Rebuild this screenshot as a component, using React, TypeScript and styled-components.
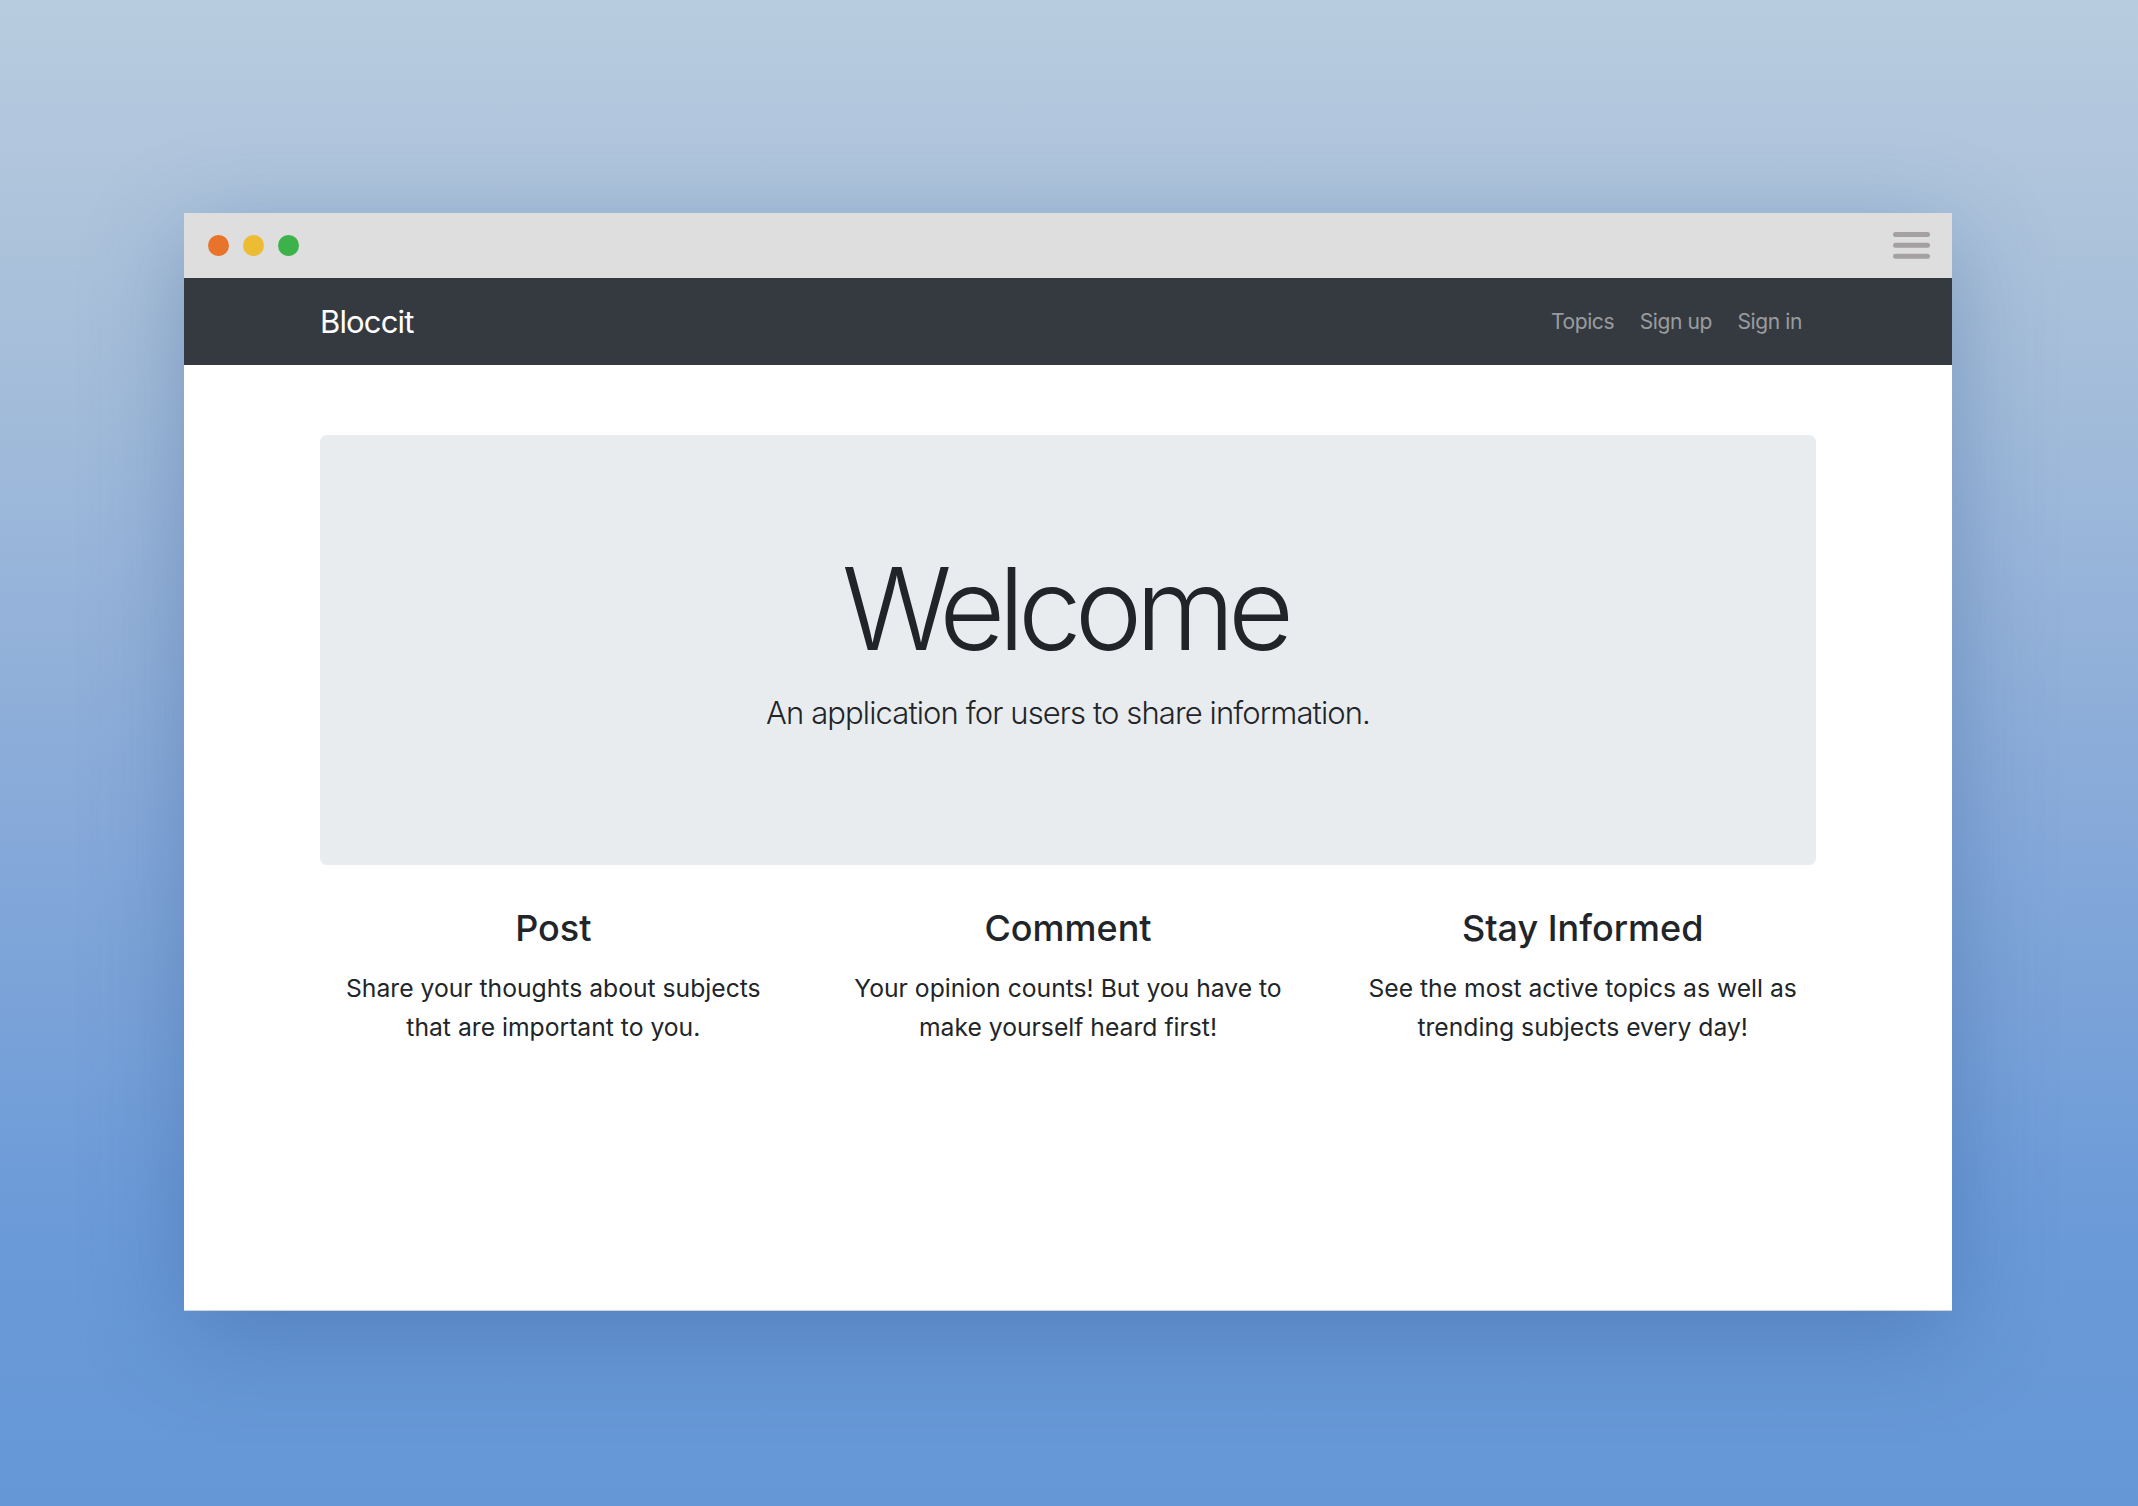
import React from "react";
import styled, { createGlobalStyle } from "styled-components";

const GlobalStyle = createGlobalStyle`
  html, body {
    margin: 0;
    padding: 0;
  }
  body {
    min-height: 1506px;
    background: linear-gradient(180deg, #b8ccdf 0%, #a9c0da 20%, #86a9d9 55%, #6c9bd8 80%, #6596d6 100%);
    font-family: Inter, "Liberation Sans", Arial, sans-serif;
    color: #212529;
  }
`;

const Stage = styled.div`
  padding: 213px 0 196px 184px;
`;

const BrowserWindow = styled.div`
  width: 1768px;
  height: 1098px;
  background: #ffffff;
  display: flex;
  flex-direction: column;
  box-shadow: 0 24px 90px rgba(40, 80, 140, 0.35);
  border-bottom: 1px solid #cfd4da;
  box-sizing: border-box;
`;

const TitleBar = styled.div`
  height: 65px;
  flex: none;
  background: #dedede;
  display: flex;
  align-items: center;
  justify-content: space-between;
  padding: 0 22px 0 24px;
`;

const Dots = styled.div`
  display: flex;
  gap: 14px;
`;

const Dot = styled.span<{ $color: string }>`
  width: 21px;
  height: 21px;
  border-radius: 50%;
  background: ${(p) => p.$color};
`;

const Navbar = styled.nav`
  height: 87px;
  flex: none;
  background: #343a40;
  display: flex;
  align-items: center;
`;

const Container = styled.div`
  width: 1544px;
  margin: 0 auto;
  padding: 0 24px;
  box-sizing: border-box;
`;

const NavInner = styled(Container)`
  display: flex;
  align-items: center;
  justify-content: space-between;
`;

const Brand = styled.a`
  font-size: 31px;
  letter-spacing: -0.85px;
  line-height: 48px;
  color: #ffffff;
  text-decoration: none;
`;

const NavLinks = styled.div`
  display: flex;
`;

const NavLink = styled.a`
  padding: 0 12.8px;
  font-size: 21px;
  letter-spacing: -0.4px;
  line-height: 36px;
  color: rgba(255, 255, 255, 0.5);
  text-decoration: none;
  &:last-child {
    padding-right: 14px;
  }
`;

const Main = styled(Container)`
  padding-top: 70px;
`;

const Jumbotron = styled.section`
  height: 430px;
  box-sizing: border-box;
  background: #e9ecef;
  border-radius: 7px;
  padding-top: 106px;
  text-align: center;
`;

const Title = styled.h1`
  margin: 0;
  padding-right: 7px;
  font-size: 114px;
  font-weight: 300;
  line-height: 1.2;
  letter-spacing: -6.9px;
`;

const Lead = styled.p`
  margin: 11px 0 0;
  font-size: 31px;
  font-weight: 300;
  letter-spacing: -0.9px;
  line-height: 1.55;
`;

const Row = styled.div`
  display: grid;
  grid-template-columns: repeat(3, 1fr);
  margin: 42px -24px 0;
`;

const Col = styled.div`
  padding: 0 24px;
  text-align: center;
`;

const FeatureTitle = styled.h3`
  margin: 0;
  font-size: 36px;
  font-weight: 500;
  line-height: 1.2;
`;

const FeatureText = styled.p`
  margin: 18.8px 0 0;
  font-size: 24.7px;
  line-height: 39.4px;
`;

const Hamburger = () => (
  <svg width="37" height="27" viewBox="0 0 37 27">
    <g stroke="#a5a1a2" strokeWidth="5" strokeLinecap="round">
      <line x1="2.5" y1="2.5" x2="34.5" y2="2.5" />
      <line x1="2.5" y1="13.3" x2="34.5" y2="13.3" />
      <line x1="2.5" y1="24.3" x2="34.5" y2="24.3" />
    </g>
  </svg>
);

const features = [
  { title: "Post", lines: ["Share your thoughts about subjects", "that are important to you."] },
  { title: "Comment", lines: ["Your opinion counts! But you have to", "make yourself heard first!"] },
  { title: "Stay Informed", lines: ["See the most active topics as well as", "trending subjects every day!"] },
];

export default function App() {
  return (
    <>
      <GlobalStyle />
      <Stage>
        <BrowserWindow>
          <TitleBar>
            <Dots>
              <Dot $color="#e8732a" />
              <Dot $color="#ecbc35" />
              <Dot $color="#3bb34a" />
            </Dots>
            <Hamburger />
          </TitleBar>
          <Navbar>
            <NavInner>
              <Brand href="#">Bloccit</Brand>
              <NavLinks>
                <NavLink href="#">Topics</NavLink>
                <NavLink href="#">Sign up</NavLink>
                <NavLink href="#">Sign in</NavLink>
              </NavLinks>
            </NavInner>
          </Navbar>
          <Main>
            <Jumbotron>
              <Title>Welcome</Title>
              <Lead>An application for users to share information.</Lead>
            </Jumbotron>
            <Row>
              {features.map((f) => (
                <Col key={f.title}>
                  <FeatureTitle>{f.title}</FeatureTitle>
                  <FeatureText>
                    {f.lines[0]}
                    <br />
                    {f.lines[1]}
                  </FeatureText>
                </Col>
              ))}
            </Row>
          </Main>
        </BrowserWindow>
      </Stage>
    </>
  );
}
